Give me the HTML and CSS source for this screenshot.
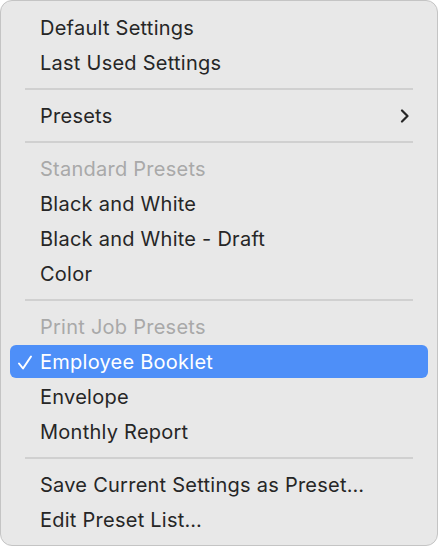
FILE: index.html
```html
<!DOCTYPE html>
<html>
<head>
<meta charset="utf-8">
<link rel="stylesheet" href="styles.css">
</head>
<body>
<div class="menu">
  <div class="item">Default Settings</div>
  <div class="item">Last Used Settings</div>
  <div class="sep"></div>
  <div class="item sub">Presets
    <svg class="chev" width="10" height="14" viewBox="0 0 10 14"><path d="M2 1.5 L7.5 7 L2 12.5" fill="none" stroke="#262626" stroke-width="2.2" stroke-linecap="round" stroke-linejoin="round"/></svg>
  </div>
  <div class="sep"></div>
  <div class="item head">Standard Presets</div>
  <div class="item">Black and White</div>
  <div class="item">Black and White - Draft</div>
  <div class="item">Color</div>
  <div class="sep"></div>
  <div class="item head">Print Job Presets</div>
  <div class="item sel">
    <svg class="check" width="16" height="16" viewBox="0 0 16 16"><path d="M2 8.5 L6 13.5 L14 1.5" fill="none" stroke="#fff" stroke-width="2" stroke-linecap="round" stroke-linejoin="round"/></svg>
    Employee Booklet</div>
  <div class="item">Envelope</div>
  <div class="item">Monthly Report</div>
  <div class="sep"></div>
  <div class="item">Save Current Settings as Preset…</div>
  <div class="item">Edit Preset List…</div>
</div>
</body>
</html>
```
FILE: styles.css
```css
html, body {
  margin: 0;
  padding: 0;
  background: #ffffff;
}
body {
  font-family: Inter, "Noto Sans", sans-serif;
}
.menu {
  width: 438px;
  height: 546px;
  box-sizing: border-box;
  margin: 0;
  background: #e8e8e8;
  border: 1px solid #c4c4c4;
  border-radius: 12px;
  padding: 9px 9px 0 9px;
  display: flex;
  flex-direction: column;
}
.item {
  position: relative;
  height: 35px;
  display: flex;
  align-items: center;
  padding-left: 30px;
  font-size: 20px;
  color: #262626;
  border-radius: 6px;
  letter-spacing: 0.25px;
}
.item.head {
  color: #a9a9a9;
}
.item.sub {
  justify-content: space-between;
  padding-right: 18px;
}
.item.sel {
  background: #4e8ff8;
  color: #ffffff;
  margin: 1px 0;
  height: 33px;
}
.check {
  position: absolute;
  left: 7px;
  top: 10px;
}
.sep {
  height: 18px;
  display: flex;
  align-items: center;
  padding: 0 15px;
}
.sep::after {
  content: "";
  display: block;
  width: 100%;
  height: 1.5px;
  background: #d0d0d0;
}
```
